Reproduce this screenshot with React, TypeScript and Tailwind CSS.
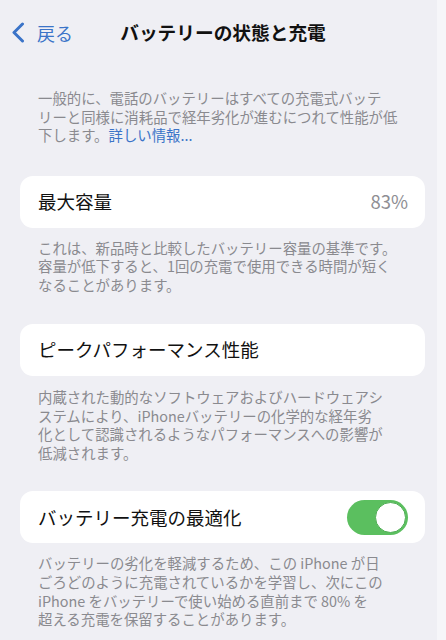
import React from "react";

const font = { fontFamily: '"Noto Sans CJK JP", "Noto Sans", sans-serif' };

function Para({ lines, className = "" }: { lines: React.ReactNode[]; className?: string }) {
  return (
    <div className={`pl-[38px] text-[14.4px] leading-[18.6px] text-[#8a8a8f] whitespace-nowrap ${className}`}>
      {lines.map((l, i) => (
        <div key={i}>{l}</div>
      ))}
    </div>
  );
}

function Card({ children, className = "" }: { children: React.ReactNode; className?: string }) {
  return (
    <div className={`ml-[20px] mr-[12px] h-[52px] rounded-[13px] bg-white pl-[18px] pr-[17px] flex items-center justify-between ${className}`}>
      {children}
    </div>
  );
}

export default function App() {
  return (
    <div className="w-[446px] h-[640px] overflow-hidden flex bg-[#efeff4]" style={font}>
      <div className="flex-1 flex flex-col">
        <div className="h-[64px] relative flex items-center justify-center pl-[9px]">
          <div className="absolute left-[11px] top-[22px] flex items-center gap-[12px]">
            <svg width="14" height="21" viewBox="0 0 14 21" fill="none">
              <path d="M11.5 2 L3 10.5 L11.5 19" stroke="#3b74c8" strokeWidth="3" strokeLinecap="round" strokeLinejoin="round" />
            </svg>
            <span className="text-[18px] text-[#3b74c8] leading-none">戻る</span>
          </div>
          <div className="text-[18.7px] font-bold text-[#111] leading-none">バッテリーの状態と充電</div>
        </div>

        <Para
          className="mt-[25px]"
          lines={[
            "一般的に、電話のバッテリーはすべての充電式バッテ",
            "リーと同様に消耗品で経年劣化が進むにつれて性能が低",
            <>
              下します。<span className="text-[#3b74c8]">詳しい情報...</span>
            </>,
          ]}
        />

        <Card className="mt-[31px]">
          <span className="text-[18.5px] text-[#111]">最大容量</span>
          <span className="text-[18.5px] text-[#8e8e93]">83%</span>
        </Card>

        <Para
          className="mt-[11px]"
          lines={[
            "これは、新品時と比較したバッテリー容量の基準です。",
            "容量が低下すると、1回の充電で使用できる時間が短く",
            "なることがあります。",
          ]}
        />

        <Card className="mt-[29px] h-[51px]">
          <span className="text-[18.5px] text-[#111]">ピークパフォーマンス性能</span>
        </Card>

        <Para
          className="mt-[12.5px]"
          lines={[
            "内蔵された動的なソフトウェアおよびハードウェアシ",
            "ステムにより、iPhoneバッテリーの化学的な経年劣",
            "化として認識されるようなパフォーマンスへの影響が",
            "低減されます。",
          ]}
        />

        <Card className="mt-[29px]">
          <span className="text-[18.5px] text-[#111]">バッテリー充電の最適化</span>
          <div className="w-[61px] h-[35px] rounded-full bg-[#5bbf5f] flex items-center justify-end pr-[2px]">
            <div className="w-[31px] h-[31px] rounded-full bg-white border border-[#4fae54]" />
          </div>
        </Card>

        <Para
          className="mt-[11px]"
          lines={[
            "バッテリーの劣化を軽減するため、この iPhone が日",
            "ごろどのように充電されているかを学習し、次にこの",
            "iPhone をバッテリーで使い始める直前まで 80% を",
            "超える充電を保留することがあります。",
          ]}
        />
      </div>
      <div className="w-[9px] bg-[#f6f6f9]" />
    </div>
  );
}
